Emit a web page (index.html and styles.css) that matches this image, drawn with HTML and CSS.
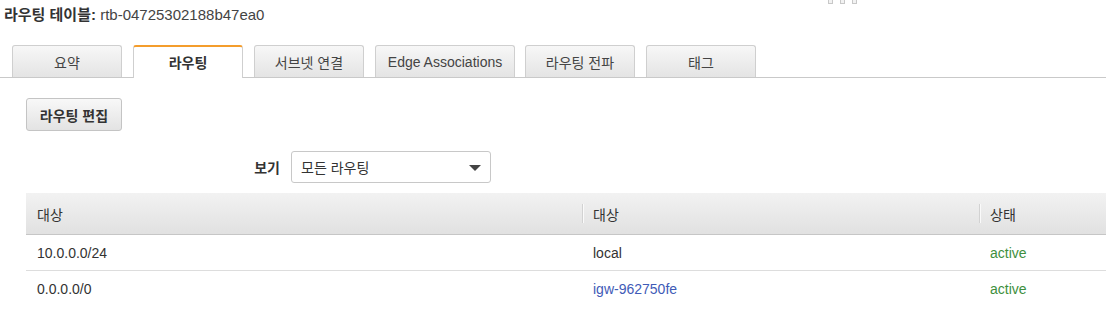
FILE: index.html
```html
<!DOCTYPE html>
<html lang="ko">
<head>
    <meta charset="UTF-8">
    <meta name="viewport" content="width=device-width, initial-scale=1.0">
    <title>라우팅 테이블</title>
    <link rel="stylesheet" href="styles.css">
</head>
<body>
    <div class="marks"><span></span><span></span><span></span></div>

    <h2 class="title"><b>라우팅 테이블:</b> rtb-04725302188b47ea0</h2>

    <div class="tabs">
        <div class="tab">요약</div>
        <div class="tab active">라우팅</div>
        <div class="tab">서브넷 연결</div>
        <div class="tab wide">Edge Associations</div>
        <div class="tab">라우팅 전파</div>
        <div class="tab">태그</div>
    </div>

    <div class="content">
        <button class="btn">라우팅 편집</button>

        <div class="filter-row">
            <label class="filter-label">보기</label>
            <div class="select">
                <span>모든 라우팅</span>
                <span class="caret"></span>
            </div>
        </div>

        <table class="routes">
            <thead>
                <tr>
                    <th class="col-dest">대상</th>
                    <th class="col-target"><span class="sep"></span>대상</th>
                    <th class="col-status"><span class="sep"></span>상태</th>
                </tr>
            </thead>
            <tbody>
                <tr>
                    <td>10.0.0.0/24</td>
                    <td>local</td>
                    <td class="status">active</td>
                </tr>
                <tr>
                    <td>0.0.0.0/0</td>
                    <td><a href="#" class="link">igw-962750fe</a></td>
                    <td class="status">active</td>
                </tr>
            </tbody>
        </table>
    </div>
</body>
</html>
```

FILE: styles.css
```css
body {
    margin: 0;
    font-family: "Liberation Sans", Arial, "Noto Sans CJK KR", sans-serif;
    font-size: 14px;
    color: #333;
    background: #fff;
    overflow: hidden;
}
.marks {
    position: absolute;
    top: -1px;
    left: 828px;
    display: flex;
    gap: 7px;
}
.marks span {
    width: 3px;
    height: 3px;
    border: 1px solid #c8c8c8;
    background: #f2f2f2;
}
.title {
    margin: 5px 0 0 4px;
    font-size: 15px;
    font-weight: normal;
    line-height: 20px;
    color: #444;
}
.title b {
    color: #333;
}
.tabs {
    display: flex;
    align-items: flex-end;
    margin-top: 20px;
    padding-left: 12px;
    border-bottom: 1px solid #c9c9c9;
    height: 32px;
}
.tab {
    box-sizing: border-box;
    width: 110px;
    height: 32px;
    margin-right: 11px;
    border: 1px solid #cfcfcf;
    border-bottom: none;
    border-radius: 3px 3px 0 0;
    background: linear-gradient(#f7f7f7, #e4e4e4);
    color: #444;
    display: flex;
    align-items: center;
    justify-content: center;
}
.tab.wide {
    width: 140px;
    margin-right: 10px;
}
.tab.active {
    height: 33px;
    margin-bottom: -1px;
    border-top: 2px solid #f49d2c;
    background: #fff;
    font-weight: bold;
    color: #333;
    padding-bottom: 1px;
}
.content {
    padding-left: 26px;
}
.btn {
    display: block;
    margin-top: 20px;
    width: 96px;
    height: 33px;
    border: 1px solid #c4c4c4;
    border-radius: 3px;
    background: linear-gradient(#f8f8f8, #e3e3e3);
    font-family: inherit;
    font-size: 14px;
    font-weight: bold;
    color: #333;
    padding: 0;
}
.filter-row {
    display: flex;
    align-items: center;
    gap: 11px;
    margin-top: 20px;
}
.filter-label {
    width: 254px;
    text-align: right;
    font-weight: bold;
    color: #333;
}
.select {
    box-sizing: border-box;
    width: 200px;
    height: 32px;
    border: 1px solid #c8c8c8;
    border-radius: 3px;
    background: #fff;
    display: flex;
    align-items: center;
    justify-content: space-between;
    padding: 0 9px 0 9px;
    color: #333;
}
.caret {
    width: 0;
    height: 0;
    border-left: 6px solid transparent;
    border-right: 6px solid transparent;
    border-top: 6px solid #444;
    margin-top: 1px;
}
.routes {
    margin-top: 10px;
    width: 1080px;
    border-collapse: collapse;
    table-layout: fixed;
}
.routes th {
    position: relative;
    height: 41px;
    padding: 0 0 0 11px;
    text-align: left;
    font-weight: normal;
    color: #333;
    background: linear-gradient(#f2f2f2, #e1e1e1);
    border-bottom: 1px solid #c6c6c6;
}
.col-dest { width: 545px; }
.col-target { width: 386px; }
.sep {
    position: absolute;
    left: 0;
    top: 11px;
    width: 1px;
    height: 19px;
    background: #d2d2d2;
    box-shadow: 1px 0 0 #fafafa;
}
.routes td {
    height: 35px;
    padding: 0 0 0 11px;
    border-bottom: 1px solid #dddddd;
    color: #333;
}
.routes tbody tr:last-child td {
    border-bottom: none;
}
.link {
    color: #3f5bb7;
    text-decoration: none;
}
.routes td.status {
    color: #3e8f3e;
}
```
